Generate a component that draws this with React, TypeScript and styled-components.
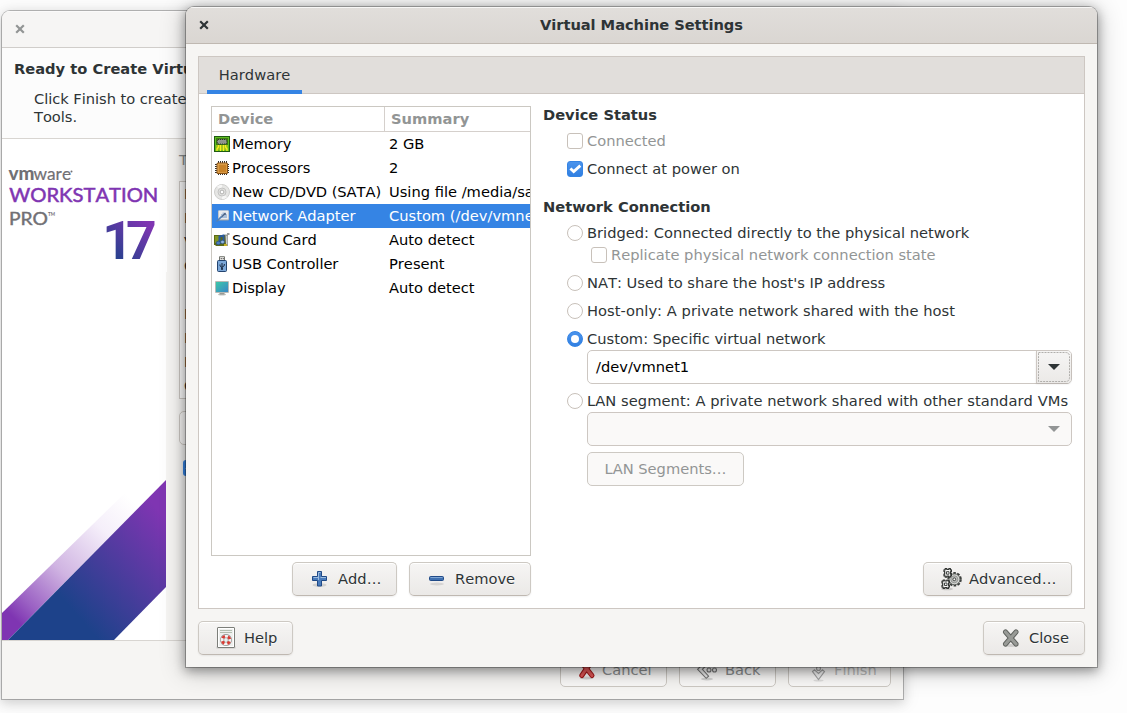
import React from "react";
import styled, { createGlobalStyle, css } from "styled-components";

const GlobalStyle = createGlobalStyle`
  * { box-sizing: border-box; }
  body { margin: 0; background: #fdfdfd; }
`;

const Desktop = styled.div`
  position: relative;
  width: 1127px;
  height: 713px;
  overflow: hidden;
  background: #fdfdfd;
  color: #2e3436;
  font: 14.667px/18px "DejaVu Sans", sans-serif;
  font-kerning: none;
  white-space: nowrap;
`;

/* ---------- windows ---------- */

const Window = styled.section<{ $x: number; $y: number; $w: number; $h: number; $active?: boolean }>`
  position: absolute;
  left: ${(p) => p.$x}px;
  top: ${(p) => p.$y}px;
  width: ${(p) => p.$w}px;
  height: ${(p) => p.$h}px;
  display: flex;
  flex-direction: column;
  overflow: hidden;
  border-radius: 8px 8px 0 0;
  background: #f6f5f3;
  box-shadow: ${(p) =>
    p.$active
      ? "0 0 0 1px rgba(0,0,0,.27), 0 3px 11px 1px rgba(0,0,0,.36), 0 3px 24px 3px rgba(0,0,0,.19)"
      : "0 0 0 1px rgba(0,0,0,.25), 0 3px 11px 1px rgba(0,0,0,.13), 0 2px 18px 3px rgba(0,0,0,.07)"};
`;

const TitleBar = styled.header<{ $active?: boolean }>`
  flex: none;
  height: 37px;
  display: grid;
  grid-template-columns: 36px 1fr 36px;
  align-items: center;
  font-weight: bold;
  letter-spacing: -0.06px;
  text-align: center;
  border-bottom: 1px solid ${(p) => (p.$active ? "#bfb8b1" : "#d0cdca")};
  background: ${(p) => (p.$active ? "linear-gradient(#e1dedb, #dad6d2)" : "#f6f5f4")};
  box-shadow: inset 0 1px ${(p) => (p.$active ? "#f8f7f6" : "#fbfafa")};
`;

const CloseGlyph = styled.svg<{ $dim?: boolean }>`
  width: 10px;
  height: 10px;
  justify-self: center;
  fill: none;
  stroke: ${(p) => (p.$dim ? "#929595" : "#2e3436")};
  stroke-width: 2.2;
`;

const CloseMark = ({ dim }: { dim?: boolean }) => (
  <CloseGlyph $dim={dim} viewBox="0 0 10 10">
    <path d="M1.2 1.2l7.6 7.6M8.8 1.2L1.2 8.8" />
  </CloseGlyph>
);

/* ---------- shared controls ---------- */

const Button = styled.button<{ $w: number; $flat?: boolean; $center?: boolean; $tone?: string }>`
  display: flex;
  align-items: center;
  justify-content: ${(p) => (p.$center ? "center" : "flex-start")};
  gap: 6px;
  width: ${(p) => p.$w}px;
  height: 34px;
  padding: 0 15px;
  font: inherit;
  font-kerning: none;
  white-space: nowrap;
  border: 1px solid #cdc9c3;
  border-radius: 5px;
  color: ${(p) => p.$tone ?? "#2e3436"};
  ${(p) =>
    p.$flat
      ? css`background: #faf9f8;`
      : css`
          border-bottom-color: #bfb8b1;
          background: linear-gradient(#f6f5f4, #ebe9e7);
          box-shadow: inset 0 1px #fff, 0 1px 2px rgba(0, 0, 0, 0.07);
          text-shadow: 0 1px rgba(255, 255, 255, 0.77);
        `}
`;

const IconBox = styled.svg<{ $size?: number }>`
  flex: none;
  width: ${(p) => p.$size ?? 24}px;
  height: 24px;
`;

const Option = styled.label<{ $disabled?: boolean; $indent?: number; $tracking?: number }>`
  display: flex;
  align-items: center;
  gap: 4px;
  height: 22px;
  padding-left: ${(p) => p.$indent ?? 24}px;
  letter-spacing: ${(p) => (p.$tracking ? `${p.$tracking}px` : "normal")};
  color: ${(p) => (p.$disabled ? "#929595" : "#2e3436")};
`;

const Mark = styled.span<{ $round?: boolean; $on?: boolean }>`
  flex: none;
  width: 16px;
  height: 16px;
  display: grid;
  place-items: center;
  border: 1px solid ${(p) => (p.$on ? "#3584e4" : "#c8c1ba")};
  border-radius: ${(p) => (p.$round ? "50%" : "3px")};
  background: ${(p) => (p.$on ? "linear-gradient(#4a93ec, #3180e2)" : "#fff")};
`;

const RadioDot = styled.span`
  width: 8px;
  height: 8px;
  border-radius: 50%;
  background: #fff;
`;

const Tick = () => (
  <svg width="14" height="14" viewBox="0 0 14 14" fill="none" stroke="#fff" strokeWidth="2.8">
    <path d="M2.4 6.4l3.300 3.200 6.600-6" />
  </svg>
);

/* ---------- wizard window ---------- */

const WizardIntro = styled.div`
  flex: none;
  height: 91px;
  padding: 12px 12px 0;
  background: #fcfcfc;
  border-bottom: 1px solid #d8d5d1;
`;

const WizardTitle = styled.div`
  font-weight: bold;
`;

const WizardText = styled.div`
  padding: 12px 0 0 20px;
  letter-spacing: -0.04px;
`;

const WizardBody = styled.div`
  height: 502px;
  display: flex;
  border-bottom: 1px solid #d8d5d1;
`;

const Banner = styled.svg`
  flex: none;
  width: 165px;
  height: 501px;
`;

const WizardSummary = styled.div`
  flex: 1;
  display: flex;
  flex-direction: column;
  padding: 12px 12px 0;
`;

const Caption = styled.div`
  color: #8b8e8f;
`;

const SummaryList = styled.div`
  height: 218px;
  margin: 12px 0;
  padding: 0 4px;
  border: 1px solid #cdc9c3;
  background: #fcfcfc;
  line-height: 24px;
`;

const SummaryLine = styled.div`
  height: 24px;
`;

const PowerOnMark = styled.span`
  display: grid;
  place-items: center;
  width: 16px;
  height: 16px;
  margin: 15px 0 0 4px;
  border-radius: 3px;
  background: #3584e4;
`;

const WizardActions = styled.footer`
  display: flex;
  justify-content: flex-end;
  gap: 12px;
  padding: 12px 12px 0;
`;

const WizardBanner = () => (
  <Banner viewBox="2 139 165 501">
    <defs>
      <linearGradient id="band" gradientUnits="userSpaceOnUse" x1="62" y1="598" x2="160" y2="512">
        <stop offset="0" stopColor="#1d428a" />
        <stop offset="1" stopColor="#7f35b2" />
      </linearGradient>
      <linearGradient id="fade" gradientUnits="userSpaceOnUse" x1="14" y1="618" x2="130" y2="498">
        <stop offset="0" stopColor="#7f35b2" />
        <stop offset=".12" stopColor="#9a60c3" />
        <stop offset=".4" stopColor="#d0b4e2" />
        <stop offset=".75" stopColor="#f5effa" />
        <stop offset="1" stopColor="#fff" />
      </linearGradient>
      <linearGradient id="digits" gradientUnits="userSpaceOnUse" x1="112" y1="262" x2="146" y2="222">
        <stop offset="0" stopColor="#1d428a" />
        <stop offset="1" stopColor="#7f35b2" />
      </linearGradient>
    </defs>
    <rect x="2" y="139" width="165" height="133" fill="#fff" />
    <rect x="2" y="272" width="164" height="368" fill="#fff" />
    <path d="M2 613L130 488l14 14L8 640H2z" fill="url(#fade)" />
    <path d="M8 640L166 480v107l-52 53z" fill="url(#band)" />
    <g fontFamily="Lato, sans-serif" fill="#717074">
      <text x="8.5" y="180" fontSize="18" fontWeight="900" textLength="26" lengthAdjust="spacingAndGlyphs">vm</text>
      <text x="33.500" y="180" fontSize="18" stroke="#717074" strokeWidth=".2" textLength="37.500" lengthAdjust="spacingAndGlyphs">ware</text>
      <circle cx="71.500" cy="171.500" r="1" />
      <text x="9.300" y="202" fontSize="18.400" stroke="#7f35b2" strokeWidth=".5" fill="#7f35b2" textLength="149" lengthAdjust="spacingAndGlyphs">WORKSTATION</text>
      <text x="9" y="225" fontSize="17" stroke="#717074" strokeWidth=".4" textLength="39" lengthAdjust="spacingAndGlyphs">PRO</text>
      <text x="48" y="216" fontSize="6" fontWeight="700" textLength="7" lengthAdjust="spacingAndGlyphs">TM</text>
    </g>
    <text y="259" fontFamily="Roboto, sans-serif" fontSize="53.500" fontWeight="700" fill="url(#digits)">
      <tspan x="102.300">1</tspan><tspan x="126">7</tspan>
    </text>
  </Banner>
);

const summaryLines = [
  "Name:", "Location:", "Version:", "Operating System:", "",
  "Hard Disk:", "Memory:", "Network Adapter:", "Other Devices:",
];

const WizardWindow = () => (
  <Window $x={2} $y={11} $w={901} $h={688}>
    <TitleBar><CloseMark dim /></TitleBar>
    <WizardIntro>
      <WizardTitle>Ready to Create Virtual Machine</WizardTitle>
      <WizardText>Click Finish to create the virtual machine<br />Tools.</WizardText>
    </WizardIntro>
    <WizardBody>
      <WizardBanner />
      <WizardSummary>
        <Caption>The virtual machine will be created</Caption>
        <SummaryList>
          {summaryLines.map((line, i) => <SummaryLine key={i}>{line}</SummaryLine>)}
        </SummaryList>
        <Button $w={180} $flat>Customize</Button>
        <PowerOnMark><Tick /></PowerOnMark>
      </WizardSummary>
    </WizardBody>
    <WizardActions>
      <Button $w={107} $flat $tone="#8b8e8f">
        <IconBox $size={20} viewBox="0 0 20 24">
          <ellipse cx="10.500" cy="20" rx="7" ry="1.500" fill="#000" opacity=".15" />
          <path d="M7 6l3.500 5L14 6M5.800 17.500l4.700-7 5.500 7" stroke="#a01818" strokeWidth="5" strokeLinecap="round" fill="none" />
          <path d="M7 6l3.500 5L14 6M5.800 17.500l4.700-7 5.500 7" stroke="#e25858" strokeWidth="3" strokeLinecap="round" fill="none" />
        </IconBox>
        Cancel
      </Button>
      <Button $w={97} $flat $tone="#8b8e8f">
        <IconBox viewBox="0 0 24 24" fill="#eee" stroke="#777" strokeWidth="1.1">
          <ellipse cx="12" cy="21" rx="6" ry="1.4" fill="#000" stroke="none" opacity=".15" />
          <path d="M10.5 3.5L2.6 11.3l8.6 9 2.4-2.2-6.2-6.800 5.400-5.400z" />
          <circle cx="14" cy="12" r="2" /><circle cx="19.500" cy="12" r="2" />
        </IconBox>
        Back
      </Button>
      <Button $w={103} $flat $tone="#bcbdbd">
        <IconBox viewBox="0 0 24 24" fill="#f2f2f2" stroke="#a5a5a5" strokeWidth="1.1">
          <ellipse cx="14.500" cy="22.500" rx="5" ry="1" fill="#000" stroke="none" opacity=".1" />
          <circle cx="14.500" cy="5" r="2" /><circle cx="14.500" cy="10.500" r="2" />
          <path d="M8.500 13.500l2-1.700 4 3.700 4-3.700 2 1.700-6 8z" />
        </IconBox>
        Finish
      </Button>
    </WizardActions>
  </Window>
);

/* ---------- settings window ---------- */

const SettingsContent = styled.div`
  flex: 1;
  display: flex;
  flex-direction: column;
  gap: 12px;
  padding: 12px;
`;

const Notebook = styled.div`
  height: 553px;
  display: flex;
  flex-direction: column;
  border: 1px solid #cdc7c2;
  background: #fff;
`;

const TabStrip = styled.div`
  flex: none;
  display: flex;
  height: 37px;
  padding-left: 8px;
  background: #e1dedb;
  border-bottom: 1px solid #cdc7c2;
`;

const Tab = styled.div`
  width: 95px;
  height: 37px;
  padding-top: 9px;
  text-align: center;
  border-bottom: 4px solid #3584e4;
`;

const Page = styled.div`
  flex: 1;
  display: flex;
  gap: 12px;
  padding: 12px;
`;

const DeviceColumn = styled.div`
  width: 320px;
  display: flex;
  flex-direction: column;
  gap: 6px;
`;

const DeviceTable = styled.div`
  height: 450px;
  border: 1px solid #cbc8c2;
  background: #fff;
  color: #000;
  overflow: hidden;
`;

const HeadRow = styled.div`
  display: grid;
  grid-template-columns: 172px 1fr;
  height: 25px;
  border-bottom: 1px solid #d5d0cc;
  color: #929595;
  font-weight: bold;
  line-height: 24px;
`;

const HeadCell = styled.div`
  padding-left: 6px;
  & + & { border-left: 1px solid #d5d0cc; }
`;

const DeviceRow = styled.div<{ $selected?: boolean }>`
  display: grid;
  grid-template-columns: 20px 157px 1fr;
  align-items: center;
  height: 24px;
  color: ${(p) => (p.$selected ? "#fff" : "#000")};
  background: ${(p) => (p.$selected ? "#3584e4" : "transparent")};
`;

const DeviceName = styled.span`
  letter-spacing: -0.06px;
`;

const DeviceIcon = styled.svg`
  width: 16px;
  height: 16px;
  margin-left: 2px;
`;

const ButtonRow = styled.div<{ $between?: boolean }>`
  display: flex;
  gap: 12px;
  justify-content: ${(p) => (p.$between ? "space-between" : "flex-end")};
`;

const DetailColumn = styled.div`
  flex: 1;
  display: flex;
  flex-direction: column;
  justify-content: space-between;
`;

const Sections = styled.div`
  display: flex;
  flex-direction: column;
  gap: 18px;
`;

const Section = styled.div`
  display: flex;
  flex-direction: column;
  gap: 6px;
`;

const SectionTitle = styled.div`
  font-weight: bold;
`;

const Indented = styled.div`
  padding-left: 44px;
`;

const Combo = styled.div<{ $disabled?: boolean }>`
  display: flex;
  align-items: center;
  justify-content: space-between;
  height: 34px;
  margin-left: 44px;
  padding-left: 8px;
  border: 1px solid #cdc7c2;
  border-radius: 5px;
  color: #000;
  background: ${(p) => (p.$disabled ? "#faf9f8" : "#fff")};
`;

const ComboArrow = styled.span<{ $raised?: boolean }>`
  width: 35px;
  height: 32px;
  padding: 1px;
  display: flex;
  ${(p) =>
    p.$raised &&
    css`
      border-left: 1px solid #cdc7c2;
      border-radius: 0 4px 4px 0;
      background: linear-gradient(#f6f5f4, #ebe9e7);
      box-shadow: 0 1px 2px rgba(0, 0, 0, 0.12);
    `}
`;

const FocusRing = styled.svg`
  width: 100%;
  height: 30px;
  fill: none;
`;

const ArrowPath = ({ color }: { color: string }) => <path d="M10 12h12l-6 6z" fill={color} />;

const icons: Record<string, React.ReactNode> = {
  memory: (
    <>
      <rect width="16" height="16" fill="#1f5a10" />
      <path d="M1 1h14v14H1z" fill="#5fbe20" />
      <path d="M2 2h12v12H2z" fill="#3b7a12" />
      <path d="M2 9h12v5H2z" fill="#9cc01a" />
      <path d="M4 3.500h8l1 2.500-1 2H4L3 6z" fill="#9a9f97" stroke="#2c2e2a" strokeDasharray="1 1" />
      <path d="M5 4.500h6.500v2.500H5z" fill="#8f948c" />
      <path d="M4.500 9v2L3 13v2M6.500 9v6M9.500 9v6M11.500 9v2l1.500 2v2" stroke="#f8f020" strokeWidth="1.300" fill="none" />
    </>
  ),
  cpu: (
    <>
      <path d="M4.500 1v14M6.500 1v14M8.500 1v14M10.500 1v14M12.500 1v14M1 4.500h14M1 6.500h14M1 8.500h14M1 10.500h14M1 12.500h14" stroke="#33322e" strokeWidth="1" />
      <rect x="2.500" y="2.500" width="11.500" height="11.500" rx="1.500" fill="#8b5314" />
      <rect x="3.500" y="3.500" width="9.500" height="9.500" rx="1" fill="#e8b060" />
      <rect x="4.500" y="4.500" width="8" height="8" fill="#c98329" />
    </>
  ),
  disc: (
    <>
      <circle cx="8" cy="8" r="7.500" fill="#e6e6e4" stroke="#cfcfcd" />
      <path d="M8 8L3 2.500A7.500 7.500 0 0 1 8 .8zM8 8l5 5.500a7.500 7.500 0 0 1-5 1.700z" fill="#f6f6f5" />
      <circle cx="8" cy="8" r="4" fill="#e2e2e0" stroke="#bdbdbb" strokeWidth=".8" />
      <circle cx="8" cy="8" r="1.900" fill="#fff" stroke="#a9a9a7" strokeWidth=".9" />
    </>
  ),
  network: (
    <>
      <rect x="4" y="2.500" width="11" height="10" rx="1" fill="#9da1a6" />
      <rect x="4.500" y="2.500" width="10" height="9" fill="#e9ebee" />
      <path d="M7 6h1.500V4.500H12V6h1v4H7z" fill="#a9bfda" />
      <path d="M7.500 9L11 5.500" stroke="#4f6584" strokeWidth="1.200" />
      <circle cx="11" cy="6" r="1" fill="#4f6584" />
      <path d="M2.500 13.500l5-4.800" stroke="#5480b4" strokeWidth="1.700" />
    </>
  ),
  sound: (
    <>
      <path d="M0 3h12v11H1.500V13H0z" fill="#5c6a17" />
      <path d="M1 4h4v7H1z" fill="#829621" />
      <path d="M11 2.500h2V1h2.500v2H14v11h-2z" fill="#999b98" />
      <path d="M12.200 4h1v8h-1z" fill="#d5d6d4" />
      <path d="M5.500 11V4.500L9.500 3.500v6" stroke="#2a5a9c" strokeWidth="2" fill="none" />
      <ellipse cx="4.300" cy="11" rx="2.200" ry="1.800" fill="#4a7cc0" stroke="#204a87" strokeWidth=".6" />
      <ellipse cx="8.500" cy="10" rx="2" ry="1.700" fill="#8fb3dc" stroke="#204a87" strokeWidth=".6" />
      <path d="M10 12h3v2h-3z" fill="#c7b12a" />
    </>
  ),
  usb: (
    <>
      <path d="M5.500 5V.7h5V5" fill="#eeeeec" stroke="#73756f" />
      <path d="M6.700 2h1v1.300h-1zM8.700 2h1v1.300h-1z" fill="#444" />
      <rect x="3.500" y="4.500" width="9" height="11" rx="1" fill="#7ba7d8" stroke="#24446f" />
      <path d="M8 7v6M6 8.500v1.300l2 1.900M10.300 8v1.600L8 11.300" stroke="#15253c" fill="none" />
      <circle cx="8" cy="13" r="1" fill="#15253c" />
    </>
  ),
  display: (
    <>
      <ellipse cx="8" cy="14.500" rx="4" ry="1" fill="#c3c5c1" />
      <path d="M5.500 12h5v2.500h-5z" fill="#979995" />
      <rect x="1" y="1" width="14" height="12" rx="1" fill="#b8bab6" />
      <rect x="2" y="2" width="12" height="10" fill="url(#screen)" />
    </>
  ),
};

const devices = [
  { icon: "memory", name: "Memory", summary: "2 GB" },
  { icon: "cpu", name: "Processors", summary: "2" },
  { icon: "disc", name: "New CD/DVD (SATA)", summary: "Using file /media/sa" },
  { icon: "network", name: "Network Adapter", summary: "Custom (/dev/vmnet1)", selected: true },
  { icon: "sound", name: "Sound Card", summary: "Auto detect" },
  { icon: "usb", name: "USB Controller", summary: "Present" },
  { icon: "display", name: "Display", summary: "Auto detect" },
];

const AddIcon = () => (
  <IconBox viewBox="0 0 24 24">
    <ellipse cx="11.500" cy="18" rx="7" ry="1.800" fill="#000" opacity=".12" />
    <path d="M9.500 4.500h4v5h5v4h-5v5.500h-4v-5.500h-5v-4h5z" fill="#4a7cbc" stroke="#204a87" strokeLinejoin="round" />
    <path d="M10.500 13V5.500h2M5.500 10.500h5M12.500 10.500h5.500" stroke="#9dbde0" fill="none" />
  </IconBox>
);

const RemoveIcon = () => (
  <IconBox viewBox="0 0 24 24">
    <ellipse cx="12" cy="17" rx="7" ry="1.500" fill="#000" opacity=".1" />
    <rect x="4.500" y="9.500" width="14" height="4" rx="1" fill="#3f70b0" stroke="#204a87" />
    <path d="M5.500 10.500h12" stroke="#7fa6d4" />
  </IconBox>
);

const HelpIcon = () => (
  <IconBox viewBox="0 0 24 24">
    <path d="M2.500 21.500h19" stroke="#000" opacity=".15" strokeWidth="2" />
    <rect x="3.500" y="1.500" width="17" height="20" rx=".5" fill="#fff" stroke="#7c7e79" />
    <rect x="5" y="3" width="14" height="17" fill="#eff0ee" />
    <path d="M6 4.500h12M6 6.500h12" stroke="#b3bfb0" />
    <circle cx="12" cy="14" r="3.900" fill="none" stroke="#888" strokeWidth="4" />
    <circle cx="12" cy="14" r="3.900" fill="none" stroke="#f4f4f2" strokeWidth="2.800" />
    <circle cx="12" cy="14" r="3.900" fill="none" stroke="#d83c34" strokeWidth="2.800" strokeDasharray="2.900 3.226" strokeDashoffset="-1.600" />
  </IconBox>
);

const GearIcon = () => (
  <IconBox viewBox="0 0 24 24">
    <ellipse cx="8" cy="22" rx="6" ry="1.300" fill="#000" opacity=".15" />
    <circle cx="15.500" cy="12.300" r="6.300" fill="none" stroke="#3b3e3c" strokeWidth="2" strokeDasharray="2.600 1.358" />
    <circle cx="15.500" cy="12.300" r="5.500" fill="#d3d5d2" stroke="#4b4e4a" strokeWidth=".9" />
    <circle cx="15.300" cy="12.300" r="3.500" fill="#bcbebb" stroke="#8b8d8a" strokeWidth=".8" />
    <g fill="#f8f8f7" stroke="#303331" strokeWidth="1.200" strokeLinejoin="round">
      <path d="M5 2.800h1.200V1.500h1.600v1h2v-1h1.600v1.300h1V4.500h-.8v2.700h.8v1.700h-1v1.200H9.800V9.200h-2v.9H6.200V8.900H5V7.200h.7V4.500H5z" />
      <path d="M3 14.200h1.200v-1.100h1.600v.9h2v-.9h1.600v1.100h1v1.700h-.8v2.500h.8v1.700h-1v1.300H7.800v-.9h-2v.9H4.200v-1.300H3v-1.700h.7v-2.500H3z" />
      <rect x="7.500" y="4.700" width="2.500" height="2.500" strokeWidth=".9" />
      <rect x="5.500" y="16" width="2.500" height="2.500" strokeWidth=".9" />
      <circle cx="15.300" cy="12.300" r="1.400" strokeWidth=".9" />
    </g>
  </IconBox>
);

const CloseIcon = () => (
  <IconBox viewBox="0 0 24 24">
    <ellipse cx="12" cy="19.500" rx="8" ry="1.500" fill="#000" opacity=".13" />
    <path d="M6.500 6l10.500 12M17 6L6.500 18" stroke="#5f625e" strokeWidth="5" strokeLinecap="round" />
    <path d="M6.500 6l10.500 12M17 6L6.500 18" stroke="#999b97" strokeWidth="3.200" strokeLinecap="round" />
  </IconBox>
);

const Radio = ({ on, tracking, children }: { on?: boolean; tracking?: number; children: React.ReactNode }) => (
  <Option $tracking={tracking}>
    <Mark $round $on={on}>{on && <RadioDot />}</Mark>
    {children}
  </Option>
);

const Tight = styled.div`
  display: flex;
  flex-direction: column;
`;

const SettingsWindow = () => (
  <Window $x={186} $y={7} $w={911} $h={660} $active>
    <TitleBar $active>
      <CloseMark />
      <span>Virtual Machine Settings</span>
    </TitleBar>
    <SettingsContent>
      <Notebook>
        <TabStrip><Tab>Hardware</Tab></TabStrip>
        <Page>
          <DeviceColumn>
            <DeviceTable>
              <HeadRow><HeadCell>Device</HeadCell><HeadCell>Summary</HeadCell></HeadRow>
              {devices.map((d) => (
                <DeviceRow key={d.name} $selected={d.selected}>
                  <DeviceIcon viewBox="0 0 16 16">
                    <defs>
                      <linearGradient id="screen" x2="1" y2="1">
                        <stop offset="0" stopColor="#3cc8a8" />
                        <stop offset="1" stopColor="#3a86c8" />
                      </linearGradient>
                    </defs>
                    {icons[d.icon]}
                  </DeviceIcon>
                  <DeviceName>{d.name}</DeviceName>
                  <span>{d.summary}</span>
                </DeviceRow>
              ))}
            </DeviceTable>
            <ButtonRow>
              <Button $w={105}><AddIcon />Add…</Button>
              <Button $w={122}><RemoveIcon />Remove</Button>
            </ButtonRow>
          </DeviceColumn>
          <DetailColumn>
            <Sections>
              <Section>
                <SectionTitle>Device Status</SectionTitle>
                <Option $disabled><Mark />Connected</Option>
                <Option><Mark $on><Tick /></Mark>Connect at power on</Option>
              </Section>
              <Section>
                <SectionTitle>Network Connection</SectionTitle>
                <Tight>
                  <Radio>Bridged: Connected directly to the physical network</Radio>
                  <Option $disabled $indent={48}><Mark />Replicate physical network connection state</Option>
                </Tight>
                <Radio>NAT: Used to share the host's IP address</Radio>
                <Radio tracking={0.05}>Host-only: A private network shared with the host</Radio>
                <Tight>
                  <Radio on>Custom: Specific virtual network</Radio>
                  <Combo>
                    /dev/vmnet1
                    <ComboArrow $raised>
                      <FocusRing viewBox="0 0 32 30">
                        <path d="M.5.5H27.500q4 0 4 4v21q0 4-4 4H.5z" stroke="#b0aeab" strokeDasharray="2 1" />
                        <ArrowPath color="#2e3436" />
                      </FocusRing>
                    </ComboArrow>
                  </Combo>
                </Tight>
                <Tight>
                  <Radio tracking={0.057}>LAN segment: A private network shared with other standard VMs</Radio>
                  <Combo $disabled>
                    <span />
                    <ComboArrow>
                      <FocusRing viewBox="0 0 33 30"><g transform="translate(1)"><ArrowPath color="#929595" /></g></FocusRing>
                    </ComboArrow>
                  </Combo>
                </Tight>
                <Indented>
                  <Button $w={157} $flat $center $tone="#929595">LAN Segments…</Button>
                </Indented>
              </Section>
            </Sections>
            <ButtonRow>
              <Button $w={149}><GearIcon />Advanced…</Button>
            </ButtonRow>
          </DetailColumn>
        </Page>
      </Notebook>
      <ButtonRow $between>
        <Button $w={95}><HelpIcon />Help</Button>
        <Button $w={102}><CloseIcon />Close</Button>
      </ButtonRow>
    </SettingsContent>
  </Window>
);

export default function App() {
  return (
    <Desktop>
      <GlobalStyle />
      <WizardWindow />
      <SettingsWindow />
    </Desktop>
  );
}
